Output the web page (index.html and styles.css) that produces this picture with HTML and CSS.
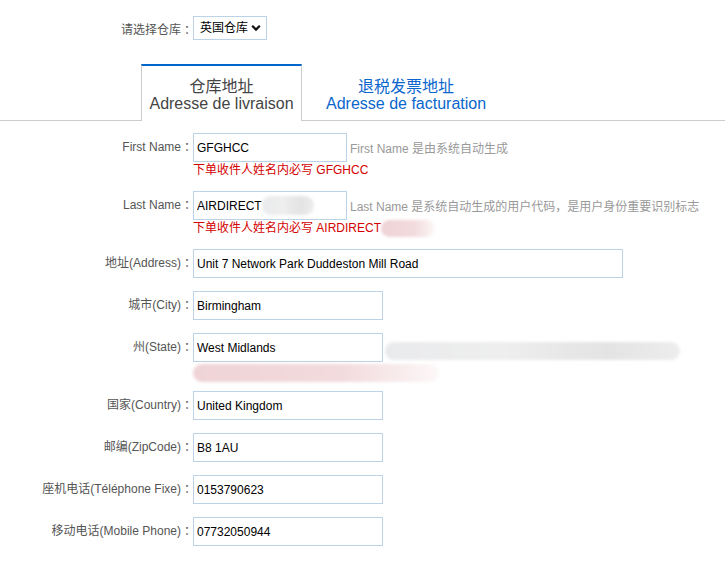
FILE: index.html
```html
<!DOCTYPE html>
<html lang="zh-CN">

<head>
    <meta charset="UTF-8">
    <meta name="viewport" content="width=device-width, initial-scale=1.0">
    <title>仓库地址</title>
    <link rel="stylesheet" href="styles.css">
</head>

<body>

    <div class="warehouse">
        <label class="warehouse-label" for="warehouse">请选择仓库<span class="colon">：</span></label>
        <span class="select-wrap">
            <select id="warehouse">
                <option selected>英国仓库</option>
                <option>法国仓库</option>
                <option>德国仓库</option>
            </select>
            <svg class="chevron" width="10" height="8" viewBox="0 0 10 8">
                <path d="M1.2 1.8 L5 5.6 L8.8 1.8" fill="none" stroke="#111" stroke-width="2.2" />
            </svg>
        </span>
    </div>

    <div class="tabs">
        <a href="#" class="tab active">
            <span>仓库地址</span>
            <span>Adresse de livraison</span>
        </a>
        <a href="#" class="tab">
            <span>退税发票地址</span>
            <span>Adresse de facturation</span>
        </a>
    </div>

    <div class="form">
        <div class="row">
            <label class="label">First Name<span class="colon">：</span></label>
            <div class="field">
                <div class="line">
                    <input type="text" class="input short" value="GFGHCC">
                    <span class="note">First Name 是由系统自动生成</span>
                </div>
                <div class="hint">下单收件人姓名内必写 GFGHCC</div>
            </div>
        </div>

        <div class="row">
            <label class="label">Last Name<span class="colon">：</span></label>
            <div class="field">
                <div class="line">
                    <span class="input-wrap">
                        <input type="text" class="input short" value="AIRDIRECT">
                        <span class="blur grey in-input"></span>
                    </span>
                    <span class="note">Last Name 是系统自动生成的用户代码，是用户身份重要识别标志</span>
                </div>
                <div class="hint">下单收件人姓名内必写 AIRDIRECT<span class="blur pink tail"></span></div>
            </div>
        </div>

        <div class="row">
            <label class="label">地址(Address)<span class="colon">：</span></label>
            <div class="field">
                <input type="text" class="input wide" value="Unit 7 Network Park Duddeston Mill Road">
            </div>
        </div>

        <div class="row">
            <label class="label">城市(City)<span class="colon">：</span></label>
            <div class="field">
                <input type="text" class="input" value="Birmingham">
            </div>
        </div>

        <div class="row">
            <label class="label">州(State)<span class="colon">：</span></label>
            <div class="field">
                <div class="line">
                    <input type="text" class="input" value="West Midlands">
                    <span class="blur grey state-note"></span>
                </div>
                <div class="hint"><span class="blur pink state-hint"></span></div>
            </div>
        </div>

        <div class="row">
            <label class="label">国家(Country)<span class="colon">：</span></label>
            <div class="field">
                <input type="text" class="input" value="United Kingdom">
            </div>
        </div>

        <div class="row">
            <label class="label">邮编(ZipCode)<span class="colon">：</span></label>
            <div class="field">
                <input type="text" class="input" value="B8 1AU">
            </div>
        </div>

        <div class="row">
            <label class="label">座机电话(Téléphone Fixe)<span class="colon">：</span></label>
            <div class="field">
                <input type="text" class="input" value="0153790623">
            </div>
        </div>

        <div class="row">
            <label class="label">移动电话(Mobile Phone)<span class="colon">：</span></label>
            <div class="field">
                <input type="text" class="input" value="07732050944">
            </div>
        </div>
    </div>

</body>

</html>
```

FILE: styles.css
```css
body {
    font-family: "Liberation Sans", "Noto Sans CJK SC", sans-serif;
    font-size: 12px;
    color: #555;
    background-color: #fff;
    margin: 0;
    padding: 0;
}

.warehouse {
    display: flex;
    align-items: center;
    padding-top: 16px;
}

.warehouse-label {
    width: 193px;
    text-align: right;
    color: #555;
}

.select-wrap {
    position: relative;
    display: inline-block;
}

.select-wrap select {
    appearance: none;
    -webkit-appearance: none;
    width: 74px;
    height: 24px;
    padding: 0 0 0 6px;
    border: 1px solid #bcd2e6;
    border-radius: 0;
    background-color: #fff;
    font-family: inherit;
    font-size: 12px;
    color: #000;
    outline: none;
}

.chevron {
    position: absolute;
    right: 6px;
    top: 8px;
    pointer-events: none;
}

.tabs {
    display: flex;
    margin-top: 24px;
    padding-left: 141px;
    border-bottom: 1px solid #ccc;
}

.tab {
    display: flex;
    flex-direction: column;
    align-items: center;
    font-size: 16px;
    line-height: 17px;
    text-decoration: none;
    color: #0a66cc;
    padding: 14px 24px 8px;
    margin-bottom: -1px;
}

.tab.active {
    width: 159px;
    padding: 12px 0 9px;
    color: #444;
    background-color: #fff;
    border-top: 2px solid #0066cc;
    border-left: 1px solid #ccc;
    border-right: 1px solid #ccc;
}

.form {
    padding-top: 12px;
}

.row {
    display: flex;
    margin-bottom: 13px;
}

.label {
    width: 193px;
    flex-shrink: 0;
    text-align: right;
    line-height: 29px;
    color: #555;
}

.colon {
    display: inline-block;
    width: 12px;
    padding-left: 3px;
    box-sizing: border-box;
    text-align: left;
}

.line {
    display: flex;
    align-items: center;
}

.input-wrap {
    position: relative;
    display: inline-block;
}

.input {
    box-sizing: border-box;
    width: 190px;
    height: 29px;
    padding: 0 3px;
    border: 1px solid #bcd2e6;
    font-family: inherit;
    font-size: 12px;
    color: #000;
    outline: none;
    display: block;
}

.input.short {
    width: 154px;
}

.input.wide {
    width: 430px;
}

.note {
    margin-left: 3px;
    color: #999;
}

.hint {
    color: #d40000;
    line-height: 16px;
    height: 16px;
    display: flex;
    align-items: center;
}

.blur {
    display: inline-block;
    border-radius: 9px;
    filter: blur(1.5px);
}

.grey {
    background: linear-gradient(90deg, #e9eaec, #eeeeee 40%, #e3e3e3 75%, #ededed);
}

.pink {
    background: linear-gradient(90deg, #efd3d6, #f2dadd 60%, #f8eced 85%, #fdf8f8);
}

.in-input {
    position: absolute;
    left: 69px;
    top: 5px;
    width: 52px;
    height: 19px;
}

.tail {
    width: 54px;
    height: 17px;
    margin-left: 0;
}

.state-note {
    width: 295px;
    height: 18px;
    margin-left: 2px;
    margin-top: 6px;
}

.state-hint {
    width: 246px;
    height: 18px;
    margin-top: 6px;
}
```
